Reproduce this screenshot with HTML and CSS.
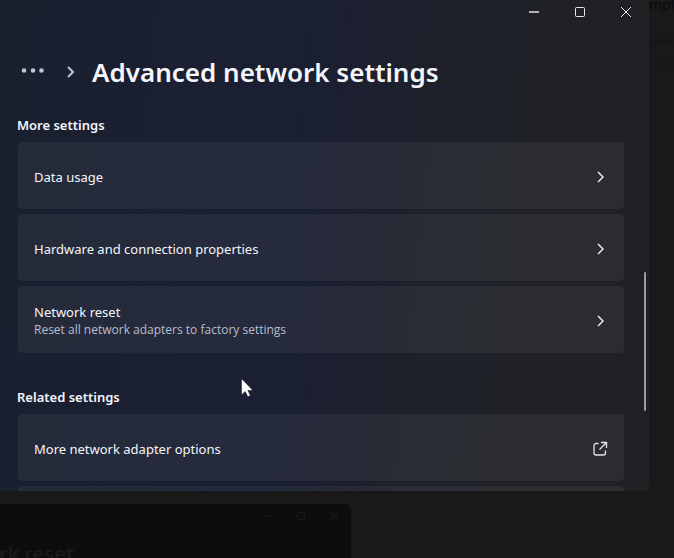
FILE: index.html
```html
<!DOCTYPE html>
<html lang="en">
<head>
    <meta charset="UTF-8">
    <meta name="viewport" content="width=device-width, initial-scale=1.0">
    <title>Advanced network settings</title>
    <link rel="stylesheet" href="styles.css">
</head>
<body>
    <div class="desktop">
        <!-- page behind the settings window -->
        <div class="browser">
            <div class="browser-title">mpla</div>
            <div class="browser-link">Down</div>
            <div class="browser-bar"></div>
        </div>

        <div class="window">
            <div class="titlebar">
                <button class="caption" aria-label="Minimize">
                    <svg width="12" height="12" viewBox="0 0 12 12"><path d="M1 6h10" stroke-width="1.5"/></svg>
                </button>
                <button class="caption" aria-label="Maximize">
                    <svg width="12" height="12" viewBox="0 0 12 12"><rect x="1.5" y="1.5" width="9" height="9" rx="1"/></svg>
                </button>
                <button class="caption" aria-label="Close">
                    <svg width="12" height="12" viewBox="0 0 12 12"><path d="M1 1l10 10M11 1L1 11"/></svg>
                </button>
            </div>

            <header class="breadcrumb">
                <button class="more" aria-label="Show more">
                    <svg width="24" height="8" viewBox="0 0 24 8"><circle cx="3" cy="2.5" r="2.3"/><circle cx="12" cy="2.5" r="2.3"/><circle cx="20.5" cy="2.5" r="2.3"/></svg>
                </button>
                <svg class="separator" width="10" height="14" viewBox="0 0 10 14"><path d="M2 2l5 5-5 5"/></svg>
                <h1>Advanced network settings</h1>
            </header>

            <main class="content">
                <section>
                    <h2>More settings</h2>
                    <a class="card" href="#usage">
                        <span class="name">Data usage</span>
                        <svg class="chevron" width="10" height="14" viewBox="0 0 10 14"><path d="M2 2l5 5-5 5"/></svg>
                    </a>
                    <a class="card" href="#hardware">
                        <span class="name">Hardware and connection properties</span>
                        <svg class="chevron" width="10" height="14" viewBox="0 0 10 14"><path d="M2 2l5 5-5 5"/></svg>
                    </a>
                    <a class="card" href="#reset">
                        <span class="name">Network reset
                            <small>Reset all network adapters to factory settings</small>
                        </span>
                        <svg class="chevron" width="10" height="14" viewBox="0 0 10 14"><path d="M2 2l5 5-5 5"/></svg>
                    </a>
                </section>

                <section>
                    <h2>Related settings</h2>
                    <a class="card" href="#adapters">
                        <span class="name">More network adapter options</span>
                        <svg class="external" width="16" height="16" viewBox="0 0 16 16"><path d="M6.5 2.500H4a2 2 0 0 0-2 2V12a2 2 0 0 0 2 2h7.500a2 2 0 0 0 2-2V9.500M9 1.500h5.500V7M14 2L7.500 8.500"/></svg>
                    </a>
                    <div class="card"></div>
                </section>
            </main>

            <div class="scrollbar"><div class="thumb"></div></div>

            <svg class="cursor" width="14" height="20" viewBox="0 0 14 20"><path d="M1.500 0.500v16.500l3.700-3.500 2.600 5.300 2.600-1.200-2.500-5.200h5z"/></svg>
        </div>

        <!-- dimmed network reset window -->
        <div class="reset-window">
            <div class="reset-caption">
                <svg width="8" height="8" viewBox="0 0 8 8"><path d="M0 4h8"/></svg>
                <svg width="8" height="8" viewBox="0 0 8 8"><rect x=".5" y=".5" width="7" height="7" rx="1"/></svg>
                <svg width="8" height="8" viewBox="0 0 8 8"><path d="M0 0l8 8M8 0L0 8"/></svg>
            </div>
            <div class="reset-title">Network reset</div>
        </div>
    </div>
</body>
</html>
```

FILE: styles.css
```css
*{
    box-sizing: border-box;
}
body{
    margin: 0;
    background-color: #191919;
    font-family: "Noto Sans", "Open Sans", sans-serif;
    color: #f4f6fb;
}
h1, h2{
    margin: 0;
    font-weight: 600;
}
button{
    padding: 0;
    border: 0;
    background: none;
}
svg{
    display: block;
    fill: none;
    stroke: #e4e6ea;
}
.desktop{
    position: relative;
    display: flex;
    flex-direction: column;
    height: 100vh;
    overflow: hidden;
}

/* page behind */
.browser{
    position: absolute;
    top: 0;
    right: 0;
    width: 25px;
    overflow: hidden;
    font-family: Roboto, sans-serif;
    color: #0c0c0d;
}
.browser-title{
    height: 32px;
    font-size: 15px;
    line-height: 10px;
}
.browser-link{
    height: 24px;
    font-size: 12px;
    line-height: 18px;
    color: #10141c;
}
.browser-bar{
    height: 15px;
    border-top: 1px solid #151515;
    border-bottom: 1px solid #151515;
}

/* settings window */
.window{
    position: relative;
    flex: 1;
    min-height: 0;
    margin-right: 25px;
    overflow: hidden;
    border-radius: 0 0 6px 0;
    background: linear-gradient(96deg, #1b202f 0%, #1a1f33 45%, #1e212a 65%, #202124 90%);
}
.titlebar{
    display: flex;
    justify-content: flex-end;
}
.caption{
    display: flex;
    align-items: center;
    justify-content: center;
    width: 46px;
    height: 24px;
}
.breadcrumb{
    display: flex;
    align-items: center;
    height: 93px;
    padding: 2px 0 0 21px;
}
.more svg{
    fill: #bfc5d6;
    stroke: none;
}
.separator{
    margin: 0 16px 0 21px;
    stroke: #bfc5d6;
    stroke-width: 2;
}
h1{
    font-size: 26px;
    line-height: 36px;
}
.content{
    padding: 0 25px 0 17px;
}
section{
    margin-bottom: 36px;
}
h2{
    height: 25px;
    font-size: 13px;
    line-height: 16px;
}
.card{
    display: flex;
    align-items: center;
    justify-content: space-between;
    height: 67px;
    margin: 0 0 5px 1px;
    padding: 2px 16px 0;
    border-radius: 4px;
    background-color: rgba(255, 255, 255, 0.05);
    color: inherit;
    text-decoration: none;
}
.name{
    font-size: 13px;
    line-height: 18px;
}
.name small{
    display: block;
    font-family: "Open Sans", sans-serif;
    font-size: 12px;
    color: #b9bece;
}
.chevron{
    margin-right: 2px;
    stroke-width: 1.5;
}
.external{
    stroke-width: 1.3;
}
.scrollbar{
    position: absolute;
    top: 0;
    right: 3px;
    bottom: 0;
    display: grid;
    grid-template-rows: 272fr 139fr 80fr;
    width: 2px;
}
.thumb{
    grid-row: 2;
    border-radius: 1px;
    background-color: #9b9ca0;
}
.cursor{
    position: absolute;
    top: 378px;
    left: 240px;
    fill: #ffffff;
    stroke: #0c0f18;
    stroke-width: 0.5;
}

/* window at the bottom */
.reset-window{
    width: 351px;
    height: 54px;
    margin-top: 13px;
    overflow: hidden;
    border-radius: 0 6px 0 0;
    background-color: #0c0e0d;
}
.reset-caption{
    display: flex;
    justify-content: flex-end;
    gap: 25px;
    padding: 8px 13px 20px;
}
.reset-caption svg{
    stroke: #191b1a;
}
.reset-title{
    width: 74px;
    direction: rtl;
    white-space: nowrap;
    font-size: 20px;
    font-weight: 600;
    color: #191b1a;
}
```
